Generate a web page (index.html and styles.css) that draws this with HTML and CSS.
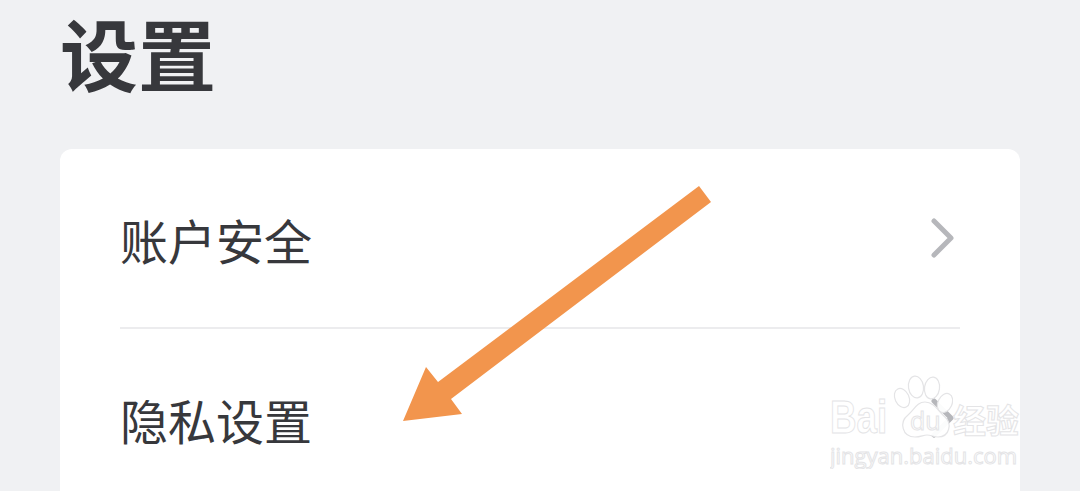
FILE: index.html
```html
<!DOCTYPE html>
<html lang="zh-CN">
  <head>
    <meta charset="UTF-8">
    <meta name="viewport" content="width=device-width, initial-scale=1.0"/>
    <title>设置</title>
    <link rel="stylesheet" href="styles.css">
  </head>
  <body>
    <main class="page">
      <h1 class="title">设置</h1>
      <ul class="card">
        <li class="row">
          <span class="row-label">账户安全</span>
          <svg class="chevron" viewBox="0 0 23 40"><path d="M3 3 L20 20 L3 37"/></svg>
        </li>
        <li class="row">
          <span class="row-label">隐私设置</span>
          <svg class="chevron" viewBox="0 0 23 40"><path d="M3 3 L20 20 L3 37"/></svg>
        </li>
      </ul>
    </main>

    <!-- arrow drawn on top of the screenshot -->
    <svg class="arrow" viewBox="0 0 1080 491">
      <polygon points="699,186 711,202 451,399 462,414 403,421 426,367 438,382"/>
    </svg>

    <div class="watermark">
      <div class="wm-top">
        <span class="wm-baidu">Bai</span>
        <span class="wm-paw">
          <svg viewBox="0 0 60 64">
            <ellipse cx="9" cy="23" rx="7" ry="10" transform="rotate(-25 9 23)"/>
            <ellipse cx="23" cy="12" rx="7.5" ry="11" transform="rotate(-8 23 12)"/>
            <ellipse cx="39" cy="13" rx="7.5" ry="11" transform="rotate(8 39 13)"/>
            <ellipse cx="52" cy="28" rx="7" ry="10" transform="rotate(25 52 28)"/>
            <path d="M32 27 C24 27 21 35 15 40 C6 47 9 62 22 62 C28 62 30 60 34 60 C38 60 41 62 45 62 C57 62 59 48 52 42 C45 36 41 27 32 27 Z"/>
          </svg>
          <span class="wm-du">du</span>
        </span>
        <span class="wm-jingyan">经验</span>
      </div>
      <div class="wm-url">jingyan.baidu.com</div>
    </div>
  </body>
</html>
```

FILE: styles.css
```css
html, body {
  height: 100%;
  margin: 0;
  overflow: hidden;
}
body {
  background-color: #f0f1f3;
  color: #37383c;
  font-family: "Noto Sans CJK SC", "Liberation Sans", sans-serif;
  position: relative;
}
.page {
  padding: 0 60px;
}
.title {
  margin: 0;
  height: 149px;
  font-family: "Liberation Sans", "Noto Sans CJK SC", sans-serif;
  font-size: 78px;
  font-weight: 700;
  line-height: 118px;
}
.card {
  list-style: none;
  margin: 0;
  padding: 0 60px;
  background-color: #fff;
  border-radius: 12px;
}
.row {
  display: flex;
  align-items: center;
  justify-content: space-between;
  height: 178px;
}
.row + .row {
  border-top: 2px solid #ececee;
}
.row-label {
  font-size: 48px;
  line-height: 60px;
  margin-top: 2px;
}
.chevron {
  width: 23px;
  height: 40px;
  margin-right: 6px;
  margin-bottom: 1px;
  fill: none;
  stroke: #b6b7bb;
  stroke-width: 5;
  stroke-linecap: round;
  stroke-linejoin: round;
}
.arrow {
  position: absolute;
  top: 0;
  left: 0;
  width: 1080px;
  height: 491px;
  fill: #f2954d;
}
.watermark {
  position: absolute;
  top: 375px;
  left: 830px;
  width: 190px;
  overflow: hidden;
  color: #fff;
  font-family: "Open Sans", "Noto Sans CJK SC", sans-serif;
  -webkit-text-stroke: 1px #e4e4e6;
}
.wm-top {
  display: flex;
  align-items: flex-end;
  height: 64px;
}
.wm-baidu {
  font-family: "Liberation Sans", sans-serif;
  font-size: 46px;
  font-weight: 700;
  line-height: 44px;
  width: 63px;
  transform: scaleX(0.8);
  transform-origin: left bottom;
}
.wm-paw {
  position: relative;
  width: 60px;
  height: 64px;
}
.wm-paw svg {
  display: block;
  width: 60px;
  height: 64px;
  fill: #fff;
  fill-opacity: 0.95;
  stroke: #e4e4e6;
  stroke-width: 1.2;
}
.wm-du {
  position: absolute;
  left: 17px;
  bottom: 4px;
  font-size: 25px;
  line-height: 30px;
  color: #fff;
}
.wm-jingyan {
  font-family: "Noto Sans CJK SC", sans-serif;
  font-size: 33px;
  font-weight: 700;
  line-height: 40px;
  white-space: nowrap;
}
.wm-url {
  font-size: 22px;
  line-height: 28px;
  margin-top: 2px;
  white-space: nowrap;
}
```
